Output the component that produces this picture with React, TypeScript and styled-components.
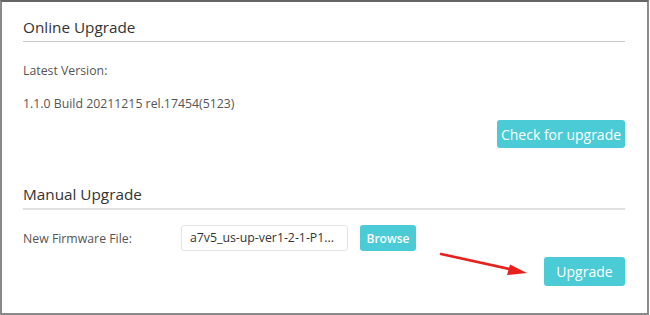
import { createGlobalStyle, styled } from "styled-components";

const GlobalStyle = createGlobalStyle`
  html, body {
    margin: 0;
    padding: 0;
    background: #ffffff;
  }
  body {
    font-family: "Open Sans", "Noto Sans", sans-serif;
  }
`;

const Frame = styled.div`
  position: relative;
  box-sizing: border-box;
  width: 649px;
  height: 315px;
  padding: 15px 22px 0 21px;
  border: 2px solid #8a8a8a;
  border-top-color: #666666;
  background: #ffffff;
  overflow: hidden;
`;

const Title = styled.h2<{ $line: number; $lineColor: string }>`
  margin: 0;
  padding-bottom: 4px;
  font-size: 15.3px;
  line-height: 20px;
  font-weight: 400;
  color: #333333;
  border-bottom: ${(p) => p.$line}px solid ${(p) => p.$lineColor};
`;

const Text = styled.div<{ $top: number }>`
  margin-top: ${(p) => p.$top}px;
  font-size: 12.3px;
  line-height: 16px;
  color: #555555;
`;

const ButtonRow = styled.div<{ $top: number }>`
  display: flex;
  justify-content: flex-end;
  margin-top: ${(p) => p.$top}px;
`;

const Button = styled.button<{ $w: number; $h: number; $size: number; $bold?: boolean }>`
  box-sizing: border-box;
  width: ${(p) => p.$w}px;
  height: ${(p) => p.$h}px;
  padding: 0;
  border: none;
  border-radius: 3px;
  background: #4acbd6;
  color: #ffffff;
  font-family: "Open Sans", "Noto Sans", sans-serif;
  font-size: ${(p) => p.$size}px;
  font-weight: ${(p) => (p.$bold ? 600 : 400)};
  cursor: pointer;
`;

const Section = styled.section<{ $top: number }>`
  margin-top: ${(p) => p.$top}px;
`;

const FieldRow = styled.div`
  display: flex;
  align-items: center;
  margin-top: 15px;
`;

const Label = styled.span`
  width: 158px;
  font-size: 12.3px;
  color: #555555;
`;

const FileInput = styled.div`
  box-sizing: border-box;
  width: 167px;
  height: 26px;
  padding: 0 8px;
  margin-right: 12px;
  border: 1px solid #e4e4e4;
  border-radius: 3px;
  font-size: 12.3px;
  line-height: 24px;
  color: #333333;
  white-space: nowrap;
  overflow: hidden;
`;

const Arrow = styled.svg`
  position: absolute;
  left: 436px;
  top: 248px;
`;

export default function App() {
  return (
    <>
      <GlobalStyle />
      <Frame>
        <Title $line={1} $lineColor="#c8c8c8">Online Upgrade</Title>
        <Text $top={21}>Latest Version:</Text>
        <Text $top={17}>1.1.0 Build 20211215 rel.17454(5123)</Text>
        <ButtonRow $top={8}>
          <Button $w={128} $h={28} $size={14}>Check for upgrade</Button>
        </ButtonRow>

        <Section $top={36}>
          <Title $line={2} $lineColor="#e0e0e0">Manual Upgrade</Title>
          <FieldRow>
            <Label>New Firmware File:</Label>
            <FileInput>a7v5_us-up-ver1-2-1-P1...</FileInput>
            <Button $w={56} $h={26} $size={12} $bold>Browse</Button>
          </FieldRow>
          <ButtonRow $top={6}>
            <Button $w={81} $h={29} $size={14}>Upgrade</Button>
          </ButtonRow>
        </Section>

        <Arrow width="95" height="30" viewBox="0 0 95 30">
          <line x1="3" y1="4" x2="74" y2="19.5" stroke="#e8201e" strokeWidth="2.6" strokeLinecap="round" />
          <polygon points="89,23 72,14.5 69,25" fill="#e8201e" />
        </Arrow>
      </Frame>
    </>
  );
}
